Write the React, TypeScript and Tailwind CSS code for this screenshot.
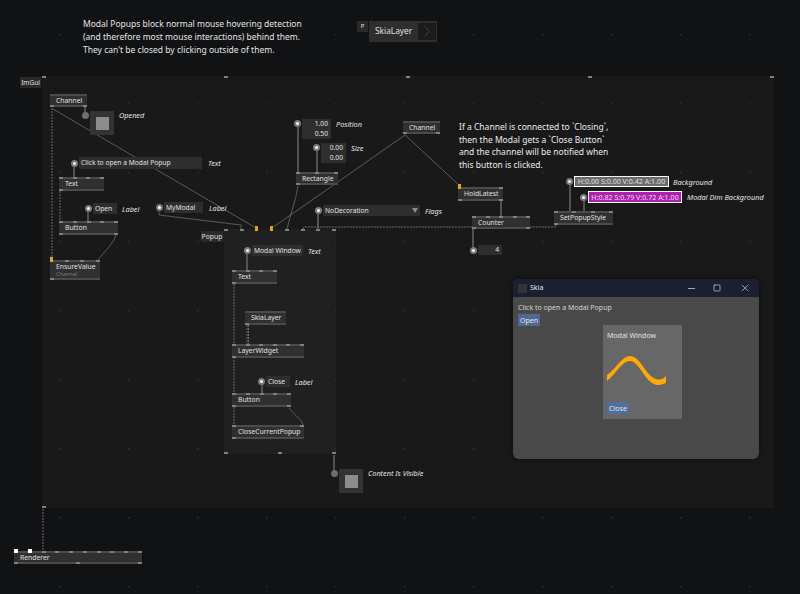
import type { ReactNode } from 'react'
import { Minus, Square, X } from 'lucide-react'

const DOT_XS = [59, 128, 197, 266, 335, 404, 473, 542, 611, 680, 749]
const DOT_YS = [34, 103, 172, 241, 310, 379, 448, 517, 586]

function PinRow({ count, orange = [], className = '' }: { count: number; orange?: number[]; className?: string }) {
  return (
    <div className={`flex justify-between h-[2px] shrink-0 bg-[#4b4b4b] ${className}`}>
      {Array.from({ length: count }).map((_, i) =>
        orange.includes(i) ? (
          <div key={i} className="w-[3px] h-[5px] -mt-[3px] bg-[#e8a317]" />
        ) : (
          <div key={i} className="w-[4px] h-[2px] bg-[#808080]" />
        ),
      )}
    </div>
  )
}

interface NodeProps {
  className: string
  label: string
  top: number
  bottom: number
  sub?: string
  orange?: number[]
}

function Node({ className, label, top, bottom, sub, orange }: NodeProps) {
  return (
    <div className={`absolute flex flex-col bg-[#303030] ${className}`}>
      <PinRow count={top} orange={orange} />
      <div className="flex-1 min-h-0 flex flex-col justify-center pl-[6px] text-[6.8px] leading-[8px] text-[#e0e0e0] whitespace-nowrap">
        <span>{label}</span>
        {sub && <span className="text-[5.5px] leading-[6px] text-[#7c7c7c]">{sub}</span>}
      </div>
      <PinRow count={bottom} />
    </div>
  )
}

function Handle({ filled, className = '' }: { filled?: boolean; className?: string }) {
  return (
    <div className={`w-[7px] h-[7px] shrink-0 rounded-full bg-[#7b7b7b] flex items-center justify-center ${className}`}>
      {!filled && <div className="w-[3px] h-[3px] rounded-full bg-white" />}
    </div>
  )
}

function Label({ children, className = '' }: { children: ReactNode; className?: string }) {
  return <span className={`italic text-[7.3px] leading-[10px] text-[#e4e4e4] whitespace-nowrap ${className}`}>{children}</span>
}

interface IOBoxProps {
  className: string
  box: string
  children: ReactNode
  label?: string
  labelGap?: string
  multi?: boolean
}

function IOBox({ className, box, children, label, labelGap = 'ml-[5px]', multi }: IOBoxProps) {
  return (
    <div className={`absolute flex ${multi ? 'items-start' : 'items-center'} ${className}`}>
      <Handle className={multi ? 'mt-[1px]' : ''} />
      <div className={`ml-[1px] shrink-0 bg-[#2e2e2e] text-[6.7px] text-[#e0e0e0] whitespace-nowrap px-[2px] ${box}`}>{children}</div>
      {label && <Label className={labelGap}>{label}</Label>}
    </div>
  )
}

function Toggle({ className, label }: { className: string; label: string }) {
  return (
    <div className={`absolute flex items-start ${className}`}>
      <Handle filled className="mt-[1px] !bg-[#6f6f6f]" />
      <div className="ml-[1px] w-[24px] h-[24px] bg-[#333333] flex items-center justify-center shrink-0">
        <div className="w-[13px] h-[13px] bg-[#8c8c8c]" />
      </div>
      <Label className="ml-[5px] -mt-[1px]">{label}</Label>
    </div>
  )
}

function Wires() {
  return (
    <svg className="absolute inset-0" width="800" height="594" fill="none">
      <g fill="#343434">
        {DOT_YS.map((y) => DOT_XS.map((x) => <rect key={`${x}-${y}`} x={x} y={y} width="1.4" height="1.4" />))}
      </g>
      {/* value links */}
      <g stroke="#6a6a6a" strokeWidth="1.4">
        <path d="M85 107V115" />
        <path d="M74 162V177" />
        <path d="M88 208V221" />
        <path d="M247 250V270" />
        <path d="M262 381V393" />
        <path d="M298 124V172" />
        <path d="M317 148V172" />
        <path d="M318 210V230" />
        <path d="M501 201V216" />
        <path d="M473 229V250" />
        <path d="M570 181V211" />
        <path d="M584 197V211" />
        <path d="M334 455V474" />
      </g>
      <g stroke="#777777" strokeWidth="0.7">
        <path d="M53 109L256 228" />
        <path d="M116 235C114 243 104 252 98 260" />
        <path d="M159 206V215L241 225V229" />
        <path d="M405 135L272 228" />
        <path d="M405 135L459 185" />
        <path d="M298 186C296 200 290 215 287 229" />
        <path d="M289 408C292 413 301 418 303 425" />
      </g>
      {/* spread links */}
      <g stroke="#777777" strokeWidth="0.9" strokeDasharray="2 1">
        <path d="M52 108V260" />
        <path d="M60 191V221" />
        <path d="M234 284V344" />
        <path d="M247 325V344M248.5 325V344" />
        <path d="M234 357V393" />
        <path d="M234 407V425" />
        <path d="M303 229C303 227 304 227 306 227H556V224" />
        <path d="M43 509V551" />
      </g>
    </svg>
  )
}

function SkiaWindow() {
  return (
    <div className="absolute left-[513px] top-[279px] w-[246px] h-[180px] rounded-[6px] overflow-hidden bg-[#494949] flex flex-col shadow-[0_0_6px_rgba(0,0,0,0.5)]">
      <div className="h-[18px] shrink-0 bg-[#1a2030] flex items-center pl-[5px] text-[#e4e4e4] text-[7px]">
        <div className="w-[9px] h-[9px] bg-[#343434] mr-[3px]" />
        <span>Skia</span>
        <div className="ml-auto flex items-center pr-[8px] text-[#d8d8d8]">
          <Minus size={11} strokeWidth={1.6} />
          <Square size={8} strokeWidth={2} className="ml-[16px]" />
          <X size={12} strokeWidth={1.3} className="ml-[18px]" />
        </div>
      </div>
      <div className="relative flex-1 pl-[5px] pt-[5px] text-[7px] leading-[11px] text-[#d4d4d4]">
        <div>Click to open a Modal Popup</div>
        <div className="mt-[1px] w-[22px] h-[12px] bg-[#4f6a92] text-[#e6e6e6] flex items-center justify-center">Open</div>
        <div className="absolute left-[90px] top-[28px] w-[79px] h-[94px] bg-[#676767] flex flex-col items-start pl-[4px]">
          <div className="mt-[5px] text-[#e2e2e2]">Modal Window</div>
          <div className="mt-auto mb-[5px] w-[22px] h-[12px] bg-[#4f6f9e] text-[#e6e6e6] flex items-center justify-center">Close</div>
        </div>
      </div>
      <svg className="absolute left-0 top-0" width="246" height="180" viewBox="513 279 246 180">
        <path
          d="M607 375C616 369 622 356 630 356C641 356 646 378 658 379.5C661 379.5 663 379 666 376L666 383C663 384 661 385 658 385C645 384.5 640 361 630 361C622 361 616 374 607 381Z"
          fill="#ffaa00"
        />
      </svg>
    </div>
  )
}

export default function App() {
  return (
    <div className="relative w-[800px] h-[594px] overflow-hidden bg-[#111214] text-[#e0e0e0] font-['Noto_Sans',sans-serif]">
      {/* ImGui region */}
      <div className="absolute left-[42px] top-[76px] w-[732px] h-[432px] bg-[#19191a] flex flex-col justify-between">
        <PinRow count={5} className="!bg-transparent" />
        <PinRow count={1} className="!bg-transparent" />
      </div>
      <div className="absolute left-[20px] top-[77px] w-[21px] h-[11px] bg-[#2a2a2a] text-[6.5px] leading-[11px] text-center">ImGui</div>

      {/* Popup region */}
      <div className="absolute left-[224px] top-[229px] w-[112px] h-[225px] bg-[#202020] flex flex-col justify-between">
        <PinRow count={8} orange={[2, 3]} className="!bg-transparent" />
        <PinRow count={3} className="!bg-transparent" />
      </div>
      <div className="absolute left-[201px] top-[231px] w-[22px] h-[11px] bg-[#2a2a2a] text-[6.8px] leading-[11px] text-center">Popup</div>

      <Wires />

      {/* Notes */}
      <div className="absolute left-[83px] top-[18px] text-[8.5px] leading-[12.8px] text-[#e4e4e4] whitespace-nowrap">
        <p>Modal Popups block normal mouse hovering detection</p>
        <p>(and therefore most mouse interactions) behind them.</p>
        <p>They can't be closed by clicking outside of them.</p>
      </div>
      <div className="absolute left-[459px] top-[121px] text-[8.5px] leading-[12.7px] text-[#ececec] whitespace-nowrap">
        <p>If a Channel is connected to `Closing`,</p>
        <p>then the Modal gets a `Close Button`</p>
        <p>and the channel will be notified when</p>
        <p>this button is clicked.</p>
      </div>

      {/* SkiaLayer definition */}
      <div className="absolute left-[357px] top-[21px] w-[11px] h-[11px] bg-[#2a2a2a] text-[6px] leading-[11px] text-center">P</div>
      <div className="absolute left-[369px] top-[21px] w-[68px] h-[21px] bg-[#2e2e2e] flex items-center pl-[6px] text-[8.3px]">
        <span>SkiaLayer</span>
        <div className="ml-auto mr-[1px] w-[18px] h-[17px] bg-[#1b1b1b] flex items-center justify-center">
          <svg width="6" height="11" viewBox="0 0 6 11" fill="none"><path d="M1 0.5L5 5.5L1 10.5" stroke="#444444" /></svg>
        </div>
      </div>

      {/* Left column */}
      <Node className="left-[50px] top-[94px] w-[37px] h-[13px]" label="Channel" top={0} bottom={2} />
      <Toggle className="left-[82px] top-[111px]" label="Opened" />
      <IOBox className="left-[71px] top-[157px]" box="w-[123px] h-[12px] leading-[12px]" labelGap="ml-[6px]" label="Text">Click to open a Modal Popup</IOBox>
      <Node className="left-[59px] top-[177px] w-[45px] h-[14px]" label="Text" top={4} bottom={1} />
      <IOBox className="left-[85px] top-[203px]" box="w-[24px] h-[11px] leading-[11px]" label="Label">Open</IOBox>
      <Node className="left-[59px] top-[221px] w-[59px] h-[14px]" label="Button" top={5} bottom={2} />
      <Node className="left-[50px] top-[260px] w-[50px] h-[20px]" label="EnsureValue" sub="Channel" top={4} bottom={1} orange={[0]} />
      <IOBox className="left-[156px] top-[202px]" box="w-[39px] h-[11px] leading-[11px]" labelGap="ml-[6px]" label="Label">MyModal</IOBox>

      {/* Inside the popup */}
      <IOBox className="left-[244px] top-[245px]" box="w-[51px] h-[11px] leading-[11px]" label="Text">Modal Window</IOBox>
      <Node className="left-[232px] top-[270px] w-[45px] h-[14px]" label="Text" top={4} bottom={1} />
      <Node className="left-[245px] top-[311px] w-[41px] h-[14px]" label="SkiaLayer" top={0} bottom={1} />
      <Node className="left-[232px] top-[344px] w-[72px] h-[14px]" label="LayerWidget" top={6} bottom={1} />
      <IOBox className="left-[258px] top-[376px]" box="w-[24px] h-[11px] leading-[11px]" label="Label">Close</IOBox>
      <Node className="left-[232px] top-[393px] w-[59px] h-[14px]" label="Button" top={5} bottom={2} />
      <Node className="left-[232px] top-[425px] w-[72px] h-[14px]" label="CloseCurrentPopup" top={2} bottom={1} />
      <Toggle className="left-[331px] top-[469px]" label="Content Is Visible" />

      {/* Middle */}
      <IOBox multi className="left-[294px] top-[119px]" box="w-[29px] h-[20px] leading-[10px] text-right !pr-[3px]" label="Position">
        1.00
        <br />
        0.50
      </IOBox>
      <IOBox multi className="left-[313px] top-[143px]" box="w-[25px] h-[20px] leading-[10px] text-right !pr-[3px]" label="Size">
        0.00
        <br />
        0.00
      </IOBox>
      <Node className="left-[296px] top-[172px] w-[42px] h-[13px]" label="Rectangle" top={3} bottom={1} />
      <Node className="left-[403px] top-[121px] w-[37px] h-[13px]" label="Channel" top={0} bottom={2} />
      <IOBox className="left-[315px] top-[205px]" box="w-[97px] h-[11px] leading-[11px] flex items-center justify-between" label="Flags">
        <span>NoDecoration</span>
        <span className="w-0 h-0 border-x-[3px] border-t-[5px] border-x-transparent border-t-[#8a8a8a]" />
      </IOBox>

      {/* Right */}
      <Node className="left-[458px] top-[187px] w-[45px] h-[14px]" label="HoldLatest" top={2} bottom={2} orange={[0]} />
      <Node className="left-[472px] top-[216px] w-[58px] h-[13px]" label="Counter" top={5} bottom={2} />
      <IOBox className="left-[470px] top-[245px]" box="w-[24px] h-[10px] leading-[10px] text-right !pr-[3px]">4</IOBox>
      <Node className="left-[554px] top-[211px] w-[59px] h-[14px]" label="SetPopupStyle" top={4} bottom={1} />
      <IOBox className="left-[566px] top-[176px]" box="w-[95px] h-[11px] leading-[9px] !bg-[#6b6b6b] border border-white !text-[7.1px] text-center !px-0" labelGap="ml-[4px]" label="Background">H:0.00 S:0.00 V:0.42 A:1.00</IOBox>
      <IOBox className="left-[580px] top-[191px]" box="w-[94px] h-[12px] leading-[10px] !bg-[#b01fb0] border border-white !text-[7.1px] text-center !px-0" label="Modal Dim Background">H:0.82 S:0.79 V:0.72 A:1.00</IOBox>

      {/* Renderer */}
      <Node className="left-[14px] top-[551px] w-[128px] h-[13px]" label="Renderer" top={10} bottom={3} />
      <div className="absolute left-[14px] top-[549px] w-[4px] h-[4px] bg-white" />
      <div className="absolute left-[28px] top-[549px] w-[4px] h-[4px] bg-white" />

      <SkiaWindow />
    </div>
  )
}
